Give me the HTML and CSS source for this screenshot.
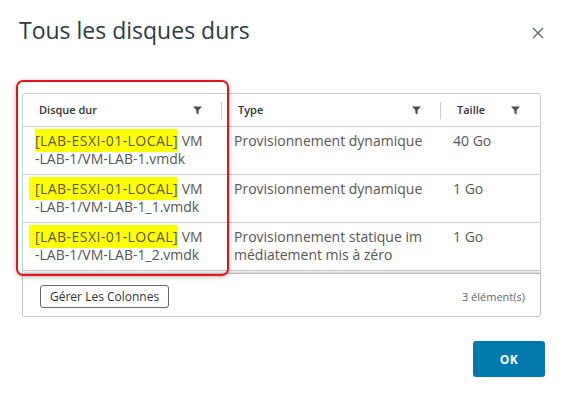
FILE: index.html
```html
<!DOCTYPE html>
<html lang="fr">
<head>
    <meta charset="UTF-8">
    <meta name="viewport" content="width=device-width, initial-scale=1.0">
    <title>Tous les disques durs</title>
    <link rel="stylesheet" href="styles.css">
</head>
<body>
    <div class="dialog">
        <div class="dialog-header">
            <h1 class="dialog-title">Tous les disques durs</h1>
            <button class="close-btn" aria-label="Fermer">
                <svg width="12" height="12" viewBox="0 0 12 12"><path d="M1 1L11 11M11 1L1 11" stroke="#5b6770" stroke-width="1.4" fill="none"/></svg>
            </button>
        </div>

        <div class="datagrid">
            <div class="dg-row dg-head">
                <div class="dg-cell">
                    <span>Disque dur</span>
                    <svg class="filter" width="9" height="9" viewBox="0 0 9 9"><path d="M0 0.5H9L5.6 4.2V8.5L3.4 7.2V4.2Z" fill="#4d4d4d"/></svg>
                </div>
                <div class="dg-cell">
                    <span>Type</span>
                    <svg class="filter" width="9" height="9" viewBox="0 0 9 9"><path d="M0 0.5H9L5.6 4.2V8.5L3.4 7.2V4.2Z" fill="#4d4d4d"/></svg>
                </div>
                <div class="dg-cell">
                    <span>Taille</span>
                    <svg class="filter" width="9" height="9" viewBox="0 0 9 9"><path d="M0 0.5H9L5.6 4.2V8.5L3.4 7.2V4.2Z" fill="#4d4d4d"/></svg>
                </div>
            </div>

            <div class="dg-row">
                <div class="dg-cell"><mark class="hl">[LAB-ESXI-01-LOCAL]</mark> VM<br>-LAB-1/VM-LAB-1.vmdk</div>
                <div class="dg-cell">Provisionnement dynamique</div>
                <div class="dg-cell">40 Go</div>
            </div>
            <div class="dg-row">
                <div class="dg-cell"><mark class="hl hl-wide">[LAB-ESXI-01-LOCAL]</mark> VM<br>-LAB-1/VM-LAB-1_1.vmdk</div>
                <div class="dg-cell">Provisionnement dynamique</div>
                <div class="dg-cell">1 Go</div>
            </div>
            <div class="dg-row">
                <div class="dg-cell"><mark class="hl hl-wide">[LAB-ESXI-01-LOCAL]</mark> VM<br>-LAB-1/VM-LAB-1_2.vmdk</div>
                <div class="dg-cell">Provisionnement statique im<br>médiatement mis à zéro</div>
                <div class="dg-cell">1 Go</div>
            </div>

            <div class="dg-footer">
                <button class="btn-outline">Gérer Les Colonnes</button>
                <span class="count">3 élément(s)</span>
            </div>
        </div>

        <div class="dialog-footer">
            <button class="btn-primary">OK</button>
        </div>

        <!-- red annotation frame drawn over the first column -->
        <div class="annotation"></div>
    </div>
</body>
</html>
```

FILE: styles.css
```css
body {
    margin: 0;
    background: #fff;
    font-family: "Open Sans", Arial, sans-serif;
    color: #565656;
}

.dialog {
    position: relative;
    width: 564px;
    height: 393px;
}

.dialog-header {
    display: flex;
    justify-content: space-between;
    align-items: flex-start;
    padding: 14px 20px 0 19px;
}

.dialog-title {
    margin: 0;
    font-size: 23px;
    line-height: 32px;
    font-weight: 400;
    color: #2b3a42;
}

.close-btn {
    border: none;
    background: none;
    padding: 0;
    margin-top: 13px;
    width: 12px;
    height: 12px;
    display: flex;
}

.datagrid {
    margin: 47px 23px 0 22px;
    border: 1px solid #ccc;
    border-radius: 3px;
}

.dg-row {
    display: grid;
    grid-template-columns: 199px 219px 1fr;
    border-bottom: 1px solid #ccc;
    min-height: 46px;
}

.dg-cell {
    padding: 5px 8px 6px 12px;
    font-size: 14px;
    line-height: 18px;
    color: #565656;
}

.dg-head {
    min-height: 32px;
}

.dg-head .dg-cell {
    position: relative;
    display: flex;
    justify-content: space-between;
    align-items: center;
    padding: 0 20px 0 16px;
    font-size: 11px;
    font-weight: 600;
    color: #333;
}

.dg-head .dg-cell + .dg-cell::before {
    content: "";
    position: absolute;
    left: -1px;
    top: 8px;
    width: 1px;
    height: 17px;
    background: #ccc;
}

.hl {
    background: #ffff00;
    color: #565656;
    padding: 2px 0;
    letter-spacing: 0.45px;
}

.hl-wide {
    margin-left: -6px;
    padding-left: 6px;
}

.dg-footer {
    display: flex;
    justify-content: space-between;
    align-items: center;
    padding: 11px 15px 8px 17px;
    border-top: 1px solid #bdbdbd;
    box-shadow: 0 -1px 2px rgba(0, 0, 0, 0.2);
    margin-top: 2px;
}

.btn-outline {
    font-family: inherit;
    font-size: 12px;
    font-weight: 500;
    color: #333;
    background: #fff;
    border: 1px solid #666;
    border-radius: 3px;
    padding: 2px 9px;
    height: 23px;
}

.count {
    font-size: 11px;
    color: #666;
}

.dialog-footer {
    display: flex;
    justify-content: flex-end;
    padding: 24px 19px 0 0;
}

.btn-primary {
    width: 72px;
    height: 36px;
    border: none;
    border-radius: 3px;
    background: #0079ad;
    color: #fff;
    font-family: inherit;
    font-size: 12px;
    font-weight: 700;
    letter-spacing: 0.5px;
}

.annotation {
    position: absolute;
    left: 16px;
    top: 80px;
    width: 209px;
    height: 192px;
    border: 2px solid #e8121b;
    border-radius: 7px;
    box-shadow: 0 1px 4px rgba(0, 0, 0, 0.3);
}
```
